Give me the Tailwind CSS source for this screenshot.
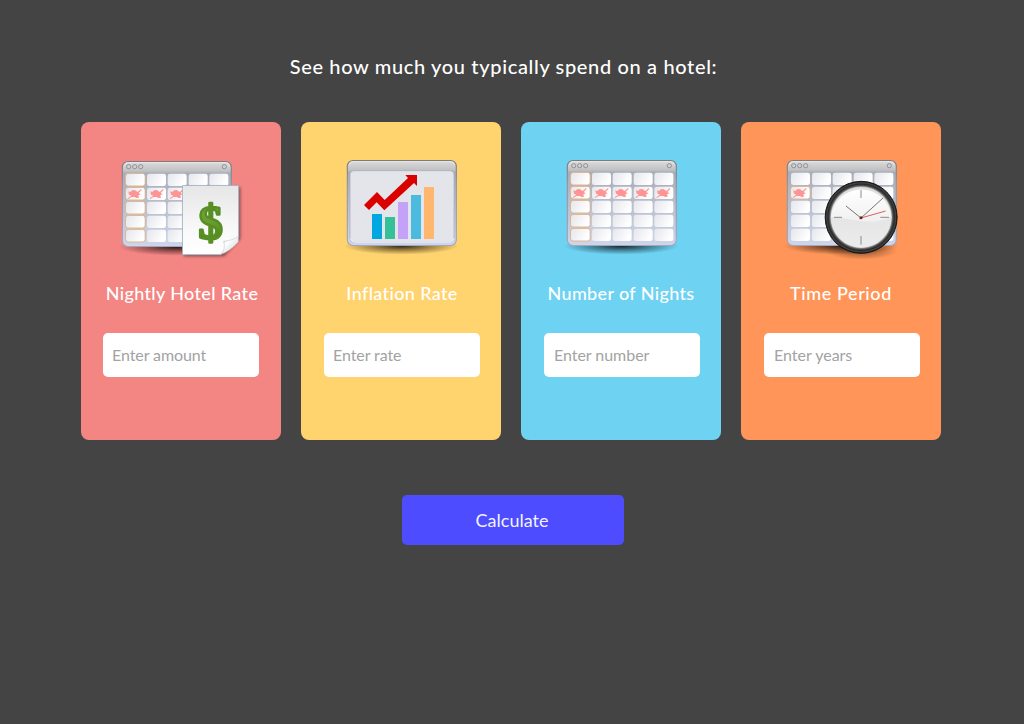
<!DOCTYPE html>
<html lang="en">
<head>
<meta charset="utf-8">
<title>Hotel spend calculator</title>
<script src="https://cdn.jsdelivr.net/npm/@tailwindcss/browser@4"></script>
</head>
<body class="min-h-screen bg-[#444444] font-[Lato,sans-serif] text-white">
<svg class="absolute size-0" aria-hidden="true">
  <defs>
    <linearGradient id="frame" x1="0" y1="0" x2="0" y2="1"><stop offset="0" stop-color="#dcdcdc"/><stop offset=".11" stop-color="#c2c2c4"/><stop offset=".14" stop-color="#a9adb8"/><stop offset="1" stop-color="#cfd5ea"/></linearGradient>
    <linearGradient id="edge" x1="0" y1="0" x2="0" y2="1"><stop offset="0" stop-color="#7c7c80"/><stop offset=".3" stop-color="#9496a0"/><stop offset="1" stop-color="#a3a6bc"/></linearGradient>
    <linearGradient id="cell" x1="0" y1="0" x2="1" y2=".35"><stop offset="0" stop-color="#e5e6ec"/><stop offset="1" stop-color="#ffffff"/></linearGradient>
    <radialGradient id="shade"><stop offset="0" stop-color="#000" stop-opacity=".8"/><stop offset=".5" stop-color="#000" stop-opacity=".38"/><stop offset="1" stop-color="#000" stop-opacity="0"/></radialGradient>
    <linearGradient id="paper" x1="0" y1="0" x2="0" y2="1"><stop offset="0" stop-color="#e6e6e6"/><stop offset=".6" stop-color="#f8f8f8"/><stop offset="1" stop-color="#fff"/></linearGradient>
    <linearGradient id="dollar" x1="0" y1="0" x2="0" y2="1"><stop offset="0" stop-color="#7cb04a"/><stop offset=".45" stop-color="#6a9e30"/><stop offset="1" stop-color="#3f7a0c"/></linearGradient>
    <linearGradient id="curl" x1="0" y1="0" x2="1" y2="1"><stop offset="0" stop-color="#b4b4b4"/><stop offset=".35" stop-color="#fff"/><stop offset="1" stop-color="#c9ccd0"/></linearGradient>
    <linearGradient id="face" x1="0" y1="0" x2="0" y2="1"><stop offset="0" stop-color="#dedede"/><stop offset="1" stop-color="#ececec"/></linearGradient>
    <linearGradient id="gloss" x1="0" y1="0" x2="0" y2="1"><stop offset="0" stop-color="#fff"/><stop offset="1" stop-color="#f0f0f0"/></linearGradient>
    <radialGradient id="ring"><stop offset=".84" stop-color="#b5b5b5"/><stop offset=".88" stop-color="#555"/><stop offset=".92" stop-color="#282828"/><stop offset=".96" stop-color="#444"/><stop offset="1" stop-color="#151515"/></radialGradient>
    <filter id="soft" x="-20%" y="-20%" width="150%" height="150%"><feGaussianBlur stdDeviation="5"/></filter>
    <g id="window">
      <ellipse cx="208" cy="288" rx="172" ry="26" fill="url(#shade)"/>
      <rect x="46" y="31.500" width="327" height="255" rx="17" fill="url(#frame)" stroke="url(#edge)" stroke-width="3.500"/>
      <path d="M51 46Q52 36 64 35H355Q367 36 368 46" fill="none" stroke="#efefef" stroke-width="2"/>
    </g>
    <g id="buttons" fill="#d0d0d0" stroke="#88888c" stroke-width="2.600">
      <circle cx="65" cy="47" r="6.300"/><circle cx="83" cy="47" r="6.300"/><circle cx="101" cy="47" r="6.300"/><circle cx="352" cy="47" r="6.300"/>
    </g>
    <g id="row" fill="url(#cell)">
      <rect x="57" y="0" width="57" height="37" rx="7"/><rect x="120" y="0" width="57" height="37" rx="7"/><rect x="182" y="0" width="57" height="37" rx="7"/><rect x="245" y="0" width="57" height="37" rx="7"/><rect x="307" y="0" width="57" height="37" rx="7"/>
    </g>
    <g id="calendar">
      <use href="#window"/><use href="#buttons"/>
      <use href="#row" y="68"/><use href="#row" y="110"/><use href="#row" y="152"/><use href="#row" y="194"/><use href="#row" y="236"/>
    </g>
    <rect id="mark" x="55.500" width="59" height="38" rx="8" fill="none" stroke="#dfb78f" stroke-width="3"/>
    <g id="column"><use href="#mark" y="67"/><use href="#mark" y="109"/><use href="#mark" y="151"/><use href="#mark" y="193"/><use href="#mark" y="235"/></g>
    <path id="plane" d="M1 29L12 21L5 18L3 8L9 10L14 5L22 4L31 10L41 1L43 3L34 13L40 17L33 20L35 27L28 28L22 25L12 25L3 31Z" fill="#ff9494"/>
  </defs>
</svg>
<main class="flex flex-col items-center">
  <h1 class="mt-[50px] mr-[17px] h-8 whitespace-nowrap text-[20px] leading-8 font-medium tracking-[0.65px]">See how much you typically spend on a hotel:</h1>
  <section class="mt-10 mr-[2px] flex gap-5">
    <article class="flex h-[318px] w-[200px] flex-col items-center rounded-lg bg-[#f38583] pt-7">
      <svg class="ml-[2px] h-[120px] w-[140px] shrink-0" viewBox="0 0 420 360">
        <g transform="translate(-15 3)"><use href="#calendar"/><use href="#column"/><use href="#plane" x="61" y="113"/><use href="#plane" x="127" y="113"/><use href="#plane" x="187" y="113"/></g>
        <path d="M216 112H385V266L336 319H216Z" fill="#000" opacity=".45" filter="url(#soft)"/>
        <path d="M211.500 106.500H380V261L326 314H211.500Z" fill="url(#paper)" stroke="#9db2c4" stroke-width="2.500"/>
        <path d="M379 259Q364 271 335 274Q342 298 326 313Q350 307 379 276Z" fill="url(#curl)" stroke="#b4bcc4" stroke-width="1.500"/>
        <text x="296" y="267" text-anchor="middle" font-family="Liberation Serif, serif" font-weight="700" font-size="146" fill="url(#dollar)" stroke="#588f24" stroke-width="8" stroke-linejoin="round">$</text>
      </svg>
      <h2 class="mt-[9px] ml-[2px] h-7 whitespace-nowrap text-[18px] leading-7 font-medium tracking-[0.36px]">Nightly Hotel Rate</h2>
      <input class="mt-[26px] h-11 w-[156px] rounded-[5px] bg-white px-[9px] pb-0.5 text-[16px] tracking-[-0.08px] placeholder:text-[#a3a3a3]" placeholder="Enter amount" aria-label="Nightly hotel rate">
    </article>
    <article class="flex h-[318px] w-[200px] flex-col items-center rounded-lg bg-[#ffd36e] pt-7">
      <svg class="ml-[2px] h-[120px] w-[140px] shrink-0" viewBox="0 0 420 360">
        <use href="#window"/>
        <rect x="54" y="62" width="312" height="215" rx="12" fill="#e4e5eb" stroke="#a4aaba" stroke-width="2"/>
        <path d="M55 265Q56 276 68 277H354Q365 276 366 265" fill="none" stroke="#e9edf9" stroke-width="3"/>
        <path d="M120 192h30v75h-30z" fill="#00a8df"/><path d="M159 201h30v66h-30z" fill="#36c09a"/><path d="M198 156h30v111h-30z" fill="#c4a2f7"/><path d="M237 135h30v132h-30z" fill="#4abade"/><path d="M276 111h30v156h-30z" fill="#ffb66f"/>
        <path d="M96 165L135 126L158 150L228 84L220 75H255V108L246 99L157 181L134 157L111 180Z" fill="#da0000"/>
      </svg>
      <h2 class="mt-[9px] ml-[2px] h-7 whitespace-nowrap text-[18px] leading-7 font-medium tracking-[0.36px]">Inflation Rate</h2>
      <input class="mt-[26px] ml-[2px] h-11 w-[156px] rounded-[5px] bg-white px-[9px] pb-0.5 text-[16px] tracking-[-0.08px] placeholder:text-[#a3a3a3]" placeholder="Enter rate" aria-label="Inflation rate">
    </article>
    <article class="flex h-[318px] w-[200px] flex-col items-center rounded-lg bg-[#6ed2f2] pt-7">
      <svg class="ml-[2px] h-[120px] w-[140px] shrink-0" viewBox="0 0 420 360">
        <use href="#calendar"/><use href="#column"/>
        <use href="#plane" x="61" y="113"/><use href="#plane" x="127" y="113"/><use href="#plane" x="187" y="113"/><use href="#plane" x="249" y="113"/><use href="#plane" x="312" y="113"/>
      </svg>
      <h2 class="mt-[9px] h-7 whitespace-nowrap text-[18px] leading-7 font-medium tracking-[0.36px]">Number of Nights</h2>
      <input class="mt-[26px] ml-[2px] h-11 w-[156px] rounded-[5px] bg-white px-[10px] pb-0.5 text-[16px] tracking-[-0.04px] placeholder:text-[#a3a3a3]" placeholder="Enter number" aria-label="Number of nights">
    </article>
    <article class="flex h-[318px] w-[200px] flex-col items-center rounded-lg bg-[#ff9558] pt-7">
      <svg class="ml-[2px] h-[120px] w-[140px] shrink-0" viewBox="0 0 420 360">
        <use href="#calendar"/><use href="#mark" y="109"/><use href="#plane" x="61" y="113"/>
        <ellipse cx="268" cy="302" rx="108" ry="27" fill="url(#shade)" opacity=".6"/>
        <circle cx="267.500" cy="202" r="108" fill="url(#ring)" stroke="#151515" stroke-width="3"/>
        <circle cx="267.500" cy="202" r="91" fill="url(#face)"/>
        <path d="M177 200A91 91 0 0 1 358 200Q326 219 268 214Q218 205 177 200Z" fill="url(#gloss)"/>
        <path d="M267 120v24M267 258v26M186 202h24M325 202h26" stroke="#777" stroke-width="2.500"/>
        <path d="M267 204L222 168M267 204L333 144" stroke="#333" stroke-width="2"/><path d="M263 205L341 183" stroke="#d43a3a" stroke-width="2.400"/><circle cx="267" cy="203" r="4.500" fill="#6b2222"/>
      </svg>
      <h2 class="mt-[9px] h-7 whitespace-nowrap text-[18px] leading-7 font-medium tracking-[0.6px]">Time Period</h2>
      <input class="mt-[26px] ml-[2px] h-11 w-[156px] rounded-[5px] bg-white px-[10px] pb-0.5 text-[16px] placeholder:text-[#a3a3a3]" placeholder="Enter years" aria-label="Time period in years">
    </article>
  </section>
  <button class="mt-[55px] ml-[2px] h-[50px] w-[222px] rounded-[5px] bg-[#4d4dff] pr-[2px] text-[18px] text-white/95">Calculate</button>
</main>
</body>
</html>
